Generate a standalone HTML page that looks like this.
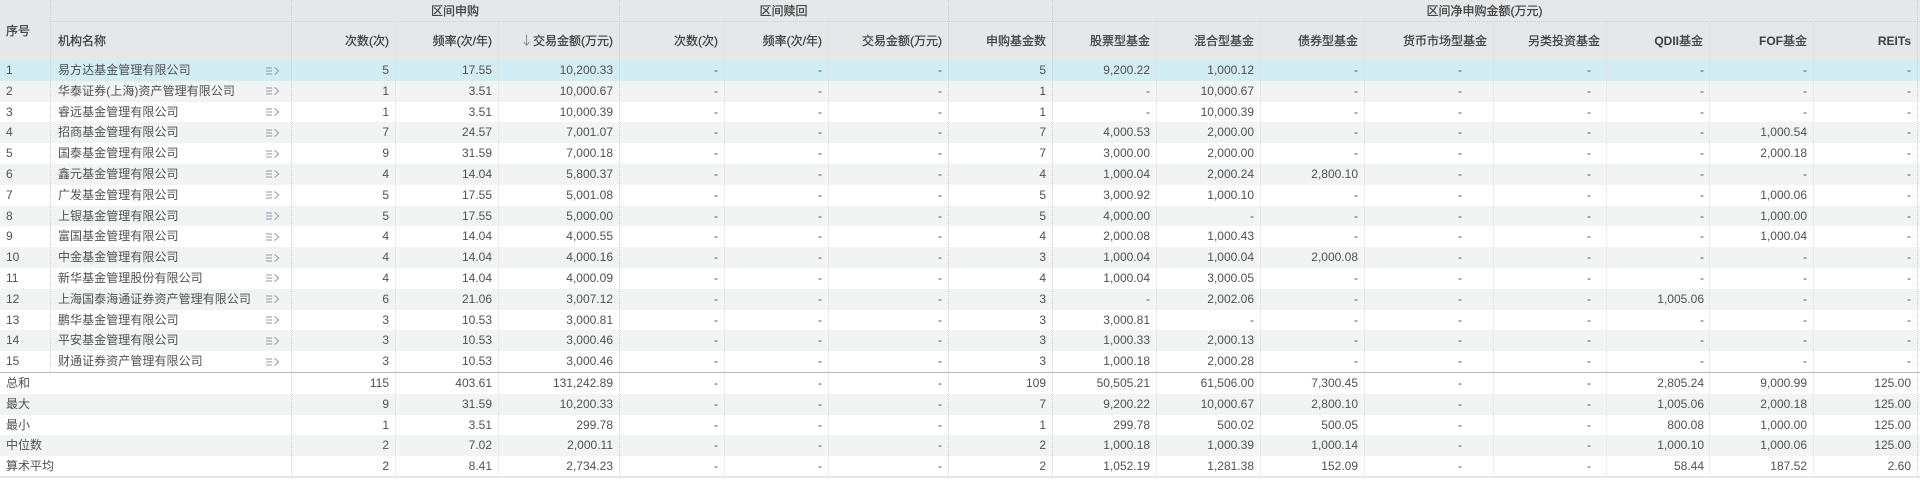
<!DOCTYPE html>
<html lang="zh"><head><meta charset="utf-8"><title>区间申购</title>
<style>
*{box-sizing:border-box}
html{background:#fff}
html,body{margin:0;padding:0;width:1920px;height:480px;overflow:hidden}
body{font:12px/20.8px "Liberation Sans","Noto Sans CJK SC",sans-serif;color:#505050;position:relative;background:#fff;filter:blur(.3px)}
#h{position:absolute;left:0;top:0;width:1920px;height:60px;background:#e6e7e9;color:#3f3f3f;-webkit-text-stroke:.25px #3f3f3f}
#h div{position:absolute;white-space:nowrap;line-height:16px}
#h b{font-weight:700;-webkit-text-stroke:0}
.g{top:3px;text-align:center}
.c{top:33px;text-align:right}
#b{position:absolute;left:0;top:60px;width:1920px}
.r{display:flex;height:20.8px;white-space:nowrap}
.r:nth-child(even){background:#f2f4f4}
.r.a{background:#d2edf4}
.r span{display:block;padding-right:6px;text-align:right;flex:none}
.r span:nth-child(1){width:50px;padding:0 0 0 6px;text-align:left}
.r span:nth-child(2){width:241px;padding:0 0 0 8px;text-align:left;position:relative;letter-spacing:.06px}
.r span:nth-child(3){width:104px}.r span:nth-child(4){width:103px}.r span:nth-child(5){width:121px}
.r span:nth-child(6){width:105px}.r span:nth-child(7){width:104px}.r span:nth-child(8){width:120px}
.r span:nth-child(9){width:104px}.r span:nth-child(10){width:104px}.r span:nth-child(11){width:104px}
.r span:nth-child(12){width:104px}.r span:nth-child(13){width:104px}.r span:nth-child(14){width:129px}
.r span:nth-child(15){width:113px}.r span:nth-child(16){width:103px}.r span:nth-child(17){width:104px}
.r span:nth-child(18){width:104px}
.r svg{position:absolute;left:216px;top:6.5px;width:14px;height:8px}
#f{position:absolute;left:0;top:372px;width:1920px;border-top:1px solid #bbb;height:104px}
#f .r:nth-child(even){background:#f2f4f4}
.r.t span:nth-child(1){width:291px}
.v{position:absolute;width:0;border-left:1px dotted #dedede}
.v.s{border-left-color:#cfcfcf}
.hl{position:absolute;left:50px;top:21px;width:1870px;border-top:1px dotted #d2d2d2}
.bl{position:absolute;left:0;top:476px;width:1920px;height:2px;background:#e6e6e6}
</style></head><body>
<svg width="0" height="0" style="position:absolute"><symbol id="i" viewBox="0 0 14 8"><path d="M0 1h6M0 4h6M0 7h6M8.5 .3L12.700 4L8.500 7.700" fill="none" stroke="#8d9aa3"/></symbol></svg>
<div id="h">
<div style="left:6px;top:23px">序号</div>
<div style="left:58px;top:33px">机构名称</div>
<div class="g" style="left:291px;width:328px">区间申购</div>
<div class="g" style="left:619px;width:329px">区间赎回</div>
<div class="g" style="left:1052px;width:865px">区间净申购金额(万元)</div>
<div class="c" style="right:1531px">次数(次)</div>
<div class="c" style="right:1428px">频率(次/年)</div>
<div class="c" style="right:1307px"><svg width="7" height="12" viewBox="0 0 7 12" style="vertical-align:-1px;margin-right:3px"><path d="M3.500 .5V11M.8 8.200L3.500 11.200L6.200 8.200" fill="none" stroke="#8a8a8a"/></svg>交易金额(万元)</div>
<div class="c" style="right:1202px">次数(次)</div>
<div class="c" style="right:1098px">频率(次/年)</div>
<div class="c" style="right:978px">交易金额(万元)</div>
<div class="c" style="right:874px">申购基金数</div>
<div class="c" style="right:770px">股票型基金</div>
<div class="c" style="right:666px">混合型基金</div>
<div class="c" style="right:562px">债券型基金</div>
<div class="c" style="right:433px">货币市场型基金</div>
<div class="c" style="right:320px">另类投资基金</div>
<div class="c" style="right:217px"><b>QDII</b>基金</div>
<div class="c" style="right:113px"><b>FOF</b>基金</div>
<div class="c" style="right:9px"><b>REITs</b></div>
</div>
<div id="b">
<div class="r a"><span>1</span><span>易方达基金管理有限公司<svg><use href="#i"/></svg></span><span>5</span><span>17.55</span><span>10,200.33</span><span>-</span><span>-</span><span>-</span><span>5</span><span>9,200.22</span><span>1,000.12</span><span>-</span><span>-</span><span>-</span><span>-</span><span>-</span><span>-</span></div>
<div class="r"><span>2</span><span>华泰证券(上海)资产管理有限公司<svg><use href="#i"/></svg></span><span>1</span><span>3.51</span><span>10,000.67</span><span>-</span><span>-</span><span>-</span><span>1</span><span>-</span><span>10,000.67</span><span>-</span><span>-</span><span>-</span><span>-</span><span>-</span><span>-</span></div>
<div class="r"><span>3</span><span>睿远基金管理有限公司<svg><use href="#i"/></svg></span><span>1</span><span>3.51</span><span>10,000.39</span><span>-</span><span>-</span><span>-</span><span>1</span><span>-</span><span>10,000.39</span><span>-</span><span>-</span><span>-</span><span>-</span><span>-</span><span>-</span></div>
<div class="r"><span>4</span><span>招商基金管理有限公司<svg><use href="#i"/></svg></span><span>7</span><span>24.57</span><span>7,001.07</span><span>-</span><span>-</span><span>-</span><span>7</span><span>4,000.53</span><span>2,000.00</span><span>-</span><span>-</span><span>-</span><span>-</span><span>1,000.54</span><span>-</span></div>
<div class="r"><span>5</span><span>国泰基金管理有限公司<svg><use href="#i"/></svg></span><span>9</span><span>31.59</span><span>7,000.18</span><span>-</span><span>-</span><span>-</span><span>7</span><span>3,000.00</span><span>2,000.00</span><span>-</span><span>-</span><span>-</span><span>-</span><span>2,000.18</span><span>-</span></div>
<div class="r"><span>6</span><span>鑫元基金管理有限公司<svg><use href="#i"/></svg></span><span>4</span><span>14.04</span><span>5,800.37</span><span>-</span><span>-</span><span>-</span><span>4</span><span>1,000.04</span><span>2,000.24</span><span>2,800.10</span><span>-</span><span>-</span><span>-</span><span>-</span><span>-</span></div>
<div class="r"><span>7</span><span>广发基金管理有限公司<svg><use href="#i"/></svg></span><span>5</span><span>17.55</span><span>5,001.08</span><span>-</span><span>-</span><span>-</span><span>5</span><span>3,000.92</span><span>1,000.10</span><span>-</span><span>-</span><span>-</span><span>-</span><span>1,000.06</span><span>-</span></div>
<div class="r"><span>8</span><span>上银基金管理有限公司<svg><use href="#i"/></svg></span><span>5</span><span>17.55</span><span>5,000.00</span><span>-</span><span>-</span><span>-</span><span>5</span><span>4,000.00</span><span>-</span><span>-</span><span>-</span><span>-</span><span>-</span><span>1,000.00</span><span>-</span></div>
<div class="r"><span>9</span><span>富国基金管理有限公司<svg><use href="#i"/></svg></span><span>4</span><span>14.04</span><span>4,000.55</span><span>-</span><span>-</span><span>-</span><span>4</span><span>2,000.08</span><span>1,000.43</span><span>-</span><span>-</span><span>-</span><span>-</span><span>1,000.04</span><span>-</span></div>
<div class="r"><span>10</span><span>中金基金管理有限公司<svg><use href="#i"/></svg></span><span>4</span><span>14.04</span><span>4,000.16</span><span>-</span><span>-</span><span>-</span><span>3</span><span>1,000.04</span><span>1,000.04</span><span>2,000.08</span><span>-</span><span>-</span><span>-</span><span>-</span><span>-</span></div>
<div class="r"><span>11</span><span>新华基金管理股份有限公司<svg><use href="#i"/></svg></span><span>4</span><span>14.04</span><span>4,000.09</span><span>-</span><span>-</span><span>-</span><span>4</span><span>1,000.04</span><span>3,000.05</span><span>-</span><span>-</span><span>-</span><span>-</span><span>-</span><span>-</span></div>
<div class="r"><span>12</span><span>上海国泰海通证券资产管理有限公司<svg><use href="#i"/></svg></span><span>6</span><span>21.06</span><span>3,007.12</span><span>-</span><span>-</span><span>-</span><span>3</span><span>-</span><span>2,002.06</span><span>-</span><span>-</span><span>-</span><span>1,005.06</span><span>-</span><span>-</span></div>
<div class="r"><span>13</span><span>鹏华基金管理有限公司<svg><use href="#i"/></svg></span><span>3</span><span>10.53</span><span>3,000.81</span><span>-</span><span>-</span><span>-</span><span>3</span><span>3,000.81</span><span>-</span><span>-</span><span>-</span><span>-</span><span>-</span><span>-</span><span>-</span></div>
<div class="r"><span>14</span><span>平安基金管理有限公司<svg><use href="#i"/></svg></span><span>3</span><span>10.53</span><span>3,000.46</span><span>-</span><span>-</span><span>-</span><span>3</span><span>1,000.33</span><span>2,000.13</span><span>-</span><span>-</span><span>-</span><span>-</span><span>-</span><span>-</span></div>
<div class="r"><span>15</span><span>财通证券资产管理有限公司<svg><use href="#i"/></svg></span><span>3</span><span>10.53</span><span>3,000.46</span><span>-</span><span>-</span><span>-</span><span>3</span><span>1,000.18</span><span>2,000.28</span><span>-</span><span>-</span><span>-</span><span>-</span><span>-</span><span>-</span></div>
</div>
<div id="f">
<div class="r t"><span>总和</span><span style="width:0;padding:0"></span><span>115</span><span>403.61</span><span>131,242.89</span><span>-</span><span>-</span><span>-</span><span>109</span><span>50,505.21</span><span>61,506.00</span><span>7,300.45</span><span>-</span><span>-</span><span>2,805.24</span><span>9,000.99</span><span>125.00</span></div>
<div class="r t"><span>最大</span><span style="width:0;padding:0"></span><span>9</span><span>31.59</span><span>10,200.33</span><span>-</span><span>-</span><span>-</span><span>7</span><span>9,200.22</span><span>10,000.67</span><span>2,800.10</span><span>-</span><span>-</span><span>1,005.06</span><span>2,000.18</span><span>125.00</span></div>
<div class="r t"><span>最小</span><span style="width:0;padding:0"></span><span>1</span><span>3.51</span><span>299.78</span><span>-</span><span>-</span><span>-</span><span>1</span><span>299.78</span><span>500.02</span><span>500.05</span><span>-</span><span>-</span><span>800.08</span><span>1,000.00</span><span>125.00</span></div>
<div class="r t"><span>中位数</span><span style="width:0;padding:0"></span><span>2</span><span>7.02</span><span>2,000.11</span><span>-</span><span>-</span><span>-</span><span>2</span><span>1,000.18</span><span>1,000.39</span><span>1,000.14</span><span>-</span><span>-</span><span>1,000.10</span><span>1,000.06</span><span>125.00</span></div>
<div class="r t"><span>算术平均</span><span style="width:0;padding:0"></span><span>2</span><span>8.41</span><span>2,734.23</span><span>-</span><span>-</span><span>-</span><span>2</span><span>1,052.19</span><span>1,281.38</span><span>152.09</span><span>-</span><span>-</span><span>58.44</span><span>187.52</span><span>2.60</span></div>
</div>
<div class="bl"></div>
<div class="hl"></div>
<div class="v s" style="left:50px;top:0;height:372px"></div>
<div class="v s" style="left:291px;top:0;height:476px"></div>
<div class="v" style="left:395px;top:21px;height:455px"></div>
<div class="v" style="left:498px;top:21px;height:455px"></div>
<div class="v s" style="left:619px;top:0;height:476px"></div>
<div class="v" style="left:724px;top:21px;height:455px"></div>
<div class="v" style="left:828px;top:21px;height:455px"></div>
<div class="v s" style="left:948px;top:0;height:476px"></div>
<div class="v s" style="left:1052px;top:0;height:476px"></div>
<div class="v" style="left:1156px;top:21px;height:455px"></div>
<div class="v" style="left:1260px;top:21px;height:455px"></div>
<div class="v" style="left:1364px;top:21px;height:455px"></div>
<div class="v" style="left:1493px;top:21px;height:455px"></div>
<div class="v" style="left:1606px;top:21px;height:455px"></div>
<div class="v" style="left:1709px;top:21px;height:455px"></div>
<div class="v" style="left:1813px;top:21px;height:455px"></div>
<div class="v s" style="left:1917px;top:0;height:476px"></div>
</body></html>
